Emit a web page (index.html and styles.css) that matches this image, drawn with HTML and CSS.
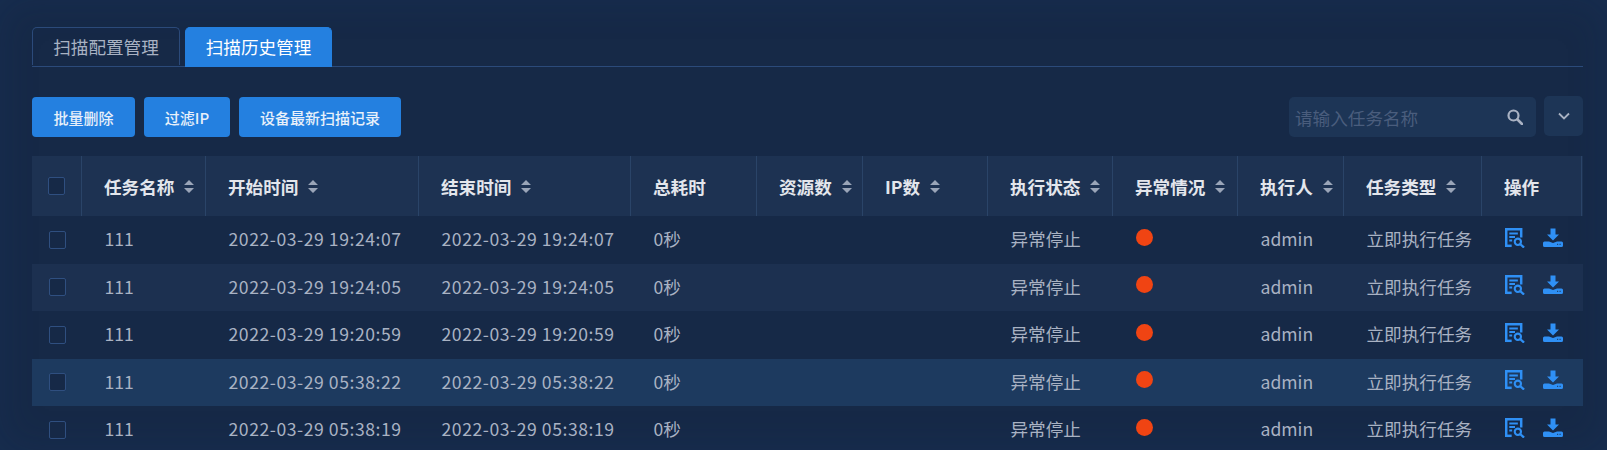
FILE: index.html
```html
<!DOCTYPE html>
<html lang="zh-CN">
<head>
    <meta charset="UTF-8">
    <title>扫描历史管理</title>
    <link rel="stylesheet" href="styles.css">
</head>
<body>
    <svg class="icon-defs" width="0" height="0">
        <symbol id="icon-report" viewBox="0 0 21 21">
            <path d="M1.300 20V1.300h15.700V10" fill="none" stroke="currentColor" stroke-width="2.600"/>
            <path d="M1.300 18.700h5.700" fill="none" stroke="currentColor" stroke-width="2.600"/>
            <path d="M4.500 5.800h9M4.500 9.500h6M4.500 13.200h3" fill="none" stroke="currentColor" stroke-width="2"/>
            <circle cx="13.500" cy="14.500" r="3.300" fill="none" stroke="currentColor" stroke-width="2.200"/>
            <path d="M16 17l4 3.500" fill="none" stroke="currentColor" stroke-width="2.400"/>
        </symbol>
        <symbol id="icon-download" viewBox="0 0 20 20">
            <path d="M7.500 0.500h5v6h3.500l-6 6-6-6h3.500z" fill="currentColor"/>
            <path d="M1.500 13.500h4.500l4 1.500 4-1.500h4.500a1.500 1.500 0 0 1 1.500 1.500v2.500a1.500 1.500 0 0 1-1.500 1.500h-17a1.500 1.500 0 0 1-1.500-1.500V15a1.500 1.500 0 0 1 1.500-1.500z" fill="currentColor"/>
            <path d="M14 16.300h1.200M16.500 16.300h1.200" stroke="#1b3355" stroke-width="1"/>
        </symbol>
        <symbol id="icon-sort" viewBox="0 0 10 13">
            <path d="M5 0l5 5H0zM5 13L0 8h10z" fill="currentColor"/>
        </symbol>
    </svg>

    <div class="tabs">
        <div class="tab">扫描配置管理</div>
        <div class="tab active">扫描历史管理</div>
    </div>

    <div class="toolbar">
        <button class="button btn-delete">批量删除</button>
        <button class="button btn-filter">过滤IP</button>
        <button class="button btn-latest">设备最新扫描记录</button>
        <div class="search">
            <span class="placeholder">请输入任务名称</span>
            <svg class="search-icon" viewBox="0 0 16 16" width="16" height="16">
                <circle cx="6.500" cy="6.500" r="5" fill="none" stroke="currentColor" stroke-width="2.200"/>
                <path d="M10.500 10.500l4.500 4.500" stroke="currentColor" stroke-width="2.600" stroke-linecap="round"/>
            </svg>
        </div>
        <div class="more">
            <svg viewBox="0 0 12 8" width="12" height="8">
                <path d="M1 1.500l5 5 5-5" fill="none" stroke="currentColor" stroke-width="1.800"/>
            </svg>
        </div>
    </div>

    <div class="table">
        <div class="row head">
            <div class="cell cell-check"><span class="check"></span></div>
            <div class="cell">任务名称<svg class="sort"><use href="#icon-sort"/></svg></div>
            <div class="cell">开始时间<svg class="sort"><use href="#icon-sort"/></svg></div>
            <div class="cell">结束时间<svg class="sort"><use href="#icon-sort"/></svg></div>
            <div class="cell">总耗时</div>
            <div class="cell">资源数<svg class="sort"><use href="#icon-sort"/></svg></div>
            <div class="cell">IP数<svg class="sort"><use href="#icon-sort"/></svg></div>
            <div class="cell">执行状态<svg class="sort"><use href="#icon-sort"/></svg></div>
            <div class="cell">异常情况<svg class="sort"><use href="#icon-sort"/></svg></div>
            <div class="cell">执行人<svg class="sort"><use href="#icon-sort"/></svg></div>
            <div class="cell">任务类型<svg class="sort"><use href="#icon-sort"/></svg></div>
            <div class="cell">操作</div>
        </div>
        <div id="rows"></div>
    </div>

    <script>
        const times = ["2022-03-29 19:24:07", "2022-03-29 19:24:05", "2022-03-29 19:20:59", "2022-03-29 05:38:22", "2022-03-29 05:38:19"];
        let html = "";
        times.forEach((t, i) => {
            const cls = i === 3 ? "row hover" : (i % 2 ? "row even" : "row");
            html += `<div class="${cls}">
                <div class="cell cell-check"><span class="check"></span></div>
                <div class="cell">111</div>
                <div class="cell date">${t}</div>
                <div class="cell date">${t}</div>
                <div class="cell">0秒</div>
                <div class="cell"></div>
                <div class="cell"></div>
                <div class="cell">异常停止</div>
                <div class="cell"><span class="dot"></span></div>
                <div class="cell">admin</div>
                <div class="cell">立即执行任务</div>
                <div class="cell actions">
                    <svg class="op"><use href="#icon-report"/></svg>
                    <svg class="op"><use href="#icon-download"/></svg>
                </div>
            </div>`;
        });
        document.getElementById("rows").innerHTML = html;
    </script>
</body>
</html>
```
FILE: styles.css
```css
* {
    box-sizing: border-box;
}

html, body {
    height: 100%;
}

body {
    margin: 0;
    padding: 27px 24px 0 32px;
    overflow: hidden;
    background: #162947;
    color: #a9b2c3;
    font-family: "Noto Sans CJK SC", "Liberation Sans", sans-serif;
    font-size: 17.600px;
    box-shadow: inset 0 0 40px rgba(30, 64, 120, 0.18);
}

.icon-defs {
    position: absolute;
}

.tabs {
    display: flex;
    gap: 5px;
    height: 40px;
    border-bottom: 1px solid #2b4a7a;
}

.tab {
    width: 148px;
    height: 38px;
    line-height: 37px;
    text-align: center;
    color: #a9b2c3;
    border: 1px solid #2b4a7a;
    border-bottom: none;
    border-radius: 5px 5px 0 0;
}

.tab.active {
    width: 147px;
    height: 40px;
    color: #ffffff;
    background: #2480e0;
    border-color: #2480e0;
}

.toolbar {
    display: flex;
    align-items: center;
    margin-top: 30px;
    height: 40px;
}

.button {
    height: 40px;
    margin-right: 9px;
    padding: 0;
    color: #e8f0fa;
    background: #2480e0;
    border: none;
    border-radius: 4px;
    font-family: inherit;
    font-size: 15px;
    font-weight: 500;
}

.btn-delete {
    width: 103px;
}

.btn-filter {
    width: 86px;
}

.btn-latest {
    width: 162px;
}

.search {
    display: flex;
    align-items: center;
    justify-content: space-between;
    width: 247px;
    height: 40px;
    margin-left: auto;
    padding: 0 13px 0 6px;
    background: #1d3556;
    border-radius: 5px;
}

.placeholder {
    color: #4a5d7d;
}

.search-icon {
    color: #a9b2c3;
}

.more {
    display: flex;
    align-items: center;
    justify-content: center;
    width: 39px;
    height: 40px;
    margin-left: 8px;
    margin-bottom: 2px;
    color: #a9b2c3;
    background: #1d3556;
    border-radius: 5px;
}

.table {
    margin-top: 19px;
}

.row {
    display: grid;
    grid-template-columns: 50px 124px 213px 212px 126px 106px 125px 125px 125px 106px 138px 100px;
    height: 47.500px;
    align-items: center;
}

.row.even {
    background: #1c3050;
}

.row.hover {
    background: #1d3a5f;
}

.row.head {
    height: 60px;
    background: #1d3252;
    color: #e3e6ec;
    font-weight: 700;
}

.head .cell {
    display: flex;
    align-items: center;
    height: 100%;
    padding-left: 22px;
    padding-bottom: 0;
    border-right: 1px solid #2a4468;
}

.cell {
    padding-left: 22.500px;
    padding-bottom: 2px;
    white-space: nowrap;
}

.date {
    letter-spacing: 0.550px;
}

.row .cell-check {
    padding-left: 17px;
    padding-bottom: 0;
}

.head .cell-check {
    padding-left: 16px;
}

.check {
    display: block;
    width: 17px;
    height: 18px;
    background: #162947;
    border: 1px solid #2f4f80;
    border-radius: 2px;
}

.sort {
    width: 10px;
    height: 13px;
    margin-left: 10px;
    color: #9aa5b8;
}

.dot {
    display: block;
    width: 17px;
    height: 17px;
    margin-top: -3px;
    background: #f04413;
    border-radius: 50%;
}

.actions {
    display: flex;
    align-items: center;
    gap: 18px;
    padding-left: 23px;
    padding-bottom: 4px;
}

.op {
    width: 20px;
    height: 20px;
    color: #2f90f5;
}
```
